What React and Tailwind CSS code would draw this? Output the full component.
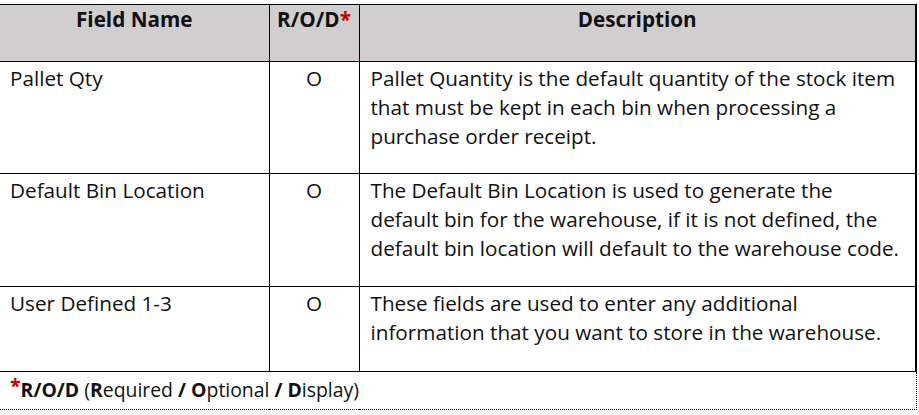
const rows = [
  {
    name: "Pallet Qty",
    rod: "O",
    height: "h-[112px]",
    lines: [
      "Pallet Quantity is the default quantity of the stock item",
      "that must be kept in each bin when processing a",
      "purchase order receipt.",
    ],
  },
  {
    name: "Default Bin Location",
    rod: "O",
    height: "h-[113px]",
    lines: [
      "The Default Bin Location is used to generate the",
      "default bin for the warehouse, if it is not defined, the",
      "default bin location will default to the warehouse code.",
    ],
  },
  {
    name: "User Defined 1-3",
    rod: "O",
    height: "h-[85px]",
    lines: [
      "These fields are used to enter any additional",
      "information that you want to store in the warehouse.",
    ],
  },
];

function App() {
  return (
    <div
      className="h-[415px] w-[919px] overflow-hidden bg-white pt-[4px] text-[20.7px] leading-[29px] text-[#111]"
      style={{ fontFamily: '"Open Sans", "Noto Sans", sans-serif' }}
    >
      <table className="w-[917px] table-fixed border-collapse">
        <colgroup>
          <col className="w-[269px]" />
          <col className="w-[90px]" />
          <col />
        </colgroup>
        <thead>
          <tr className="h-[57px] bg-[#d0cece]">
            <th className="border-y border-r border-black pt-0 align-top font-bold">Field Name</th>
            <th className="border-y border-r border-black pt-0 align-top font-bold">
              R/O/D<span className="text-[#c00000]">*</span>
            </th>
            <th className="border-y border-r-2 border-black pt-0 align-top font-bold">Description</th>
          </tr>
        </thead>
        <tbody>
          {rows.map((row) => (
            <tr key={row.name} className={row.height}>
              <td className="border-b border-r border-black pl-[10px] pt-[2px] align-top">{row.name}</td>
              <td className="border-b border-r border-black pt-[2px] text-center align-top">{row.rod}</td>
              <td className="whitespace-nowrap border-b border-r-2 border-black pl-[11px] pt-[2px] align-top">
                {row.lines.map((line) => (
                  <div key={line}>{line}</div>
                ))}
              </td>
            </tr>
          ))}
          <tr className="h-[38px]">
            <td
              colSpan={3}
              className="border-y border-r border-dotted border-black pl-[10px] pb-[2px] align-middle text-[19.4px]"
            >
              <span className="relative top-[-4px] font-bold text-[#c00000]">*</span>
              <b>R/O/D</b> (<b>R</b>equired <b>/ O</b>ptional <b>/ D</b>isplay)
            </td>
          </tr>
        </tbody>
      </table>
    </div>
  );
}

export default App;
